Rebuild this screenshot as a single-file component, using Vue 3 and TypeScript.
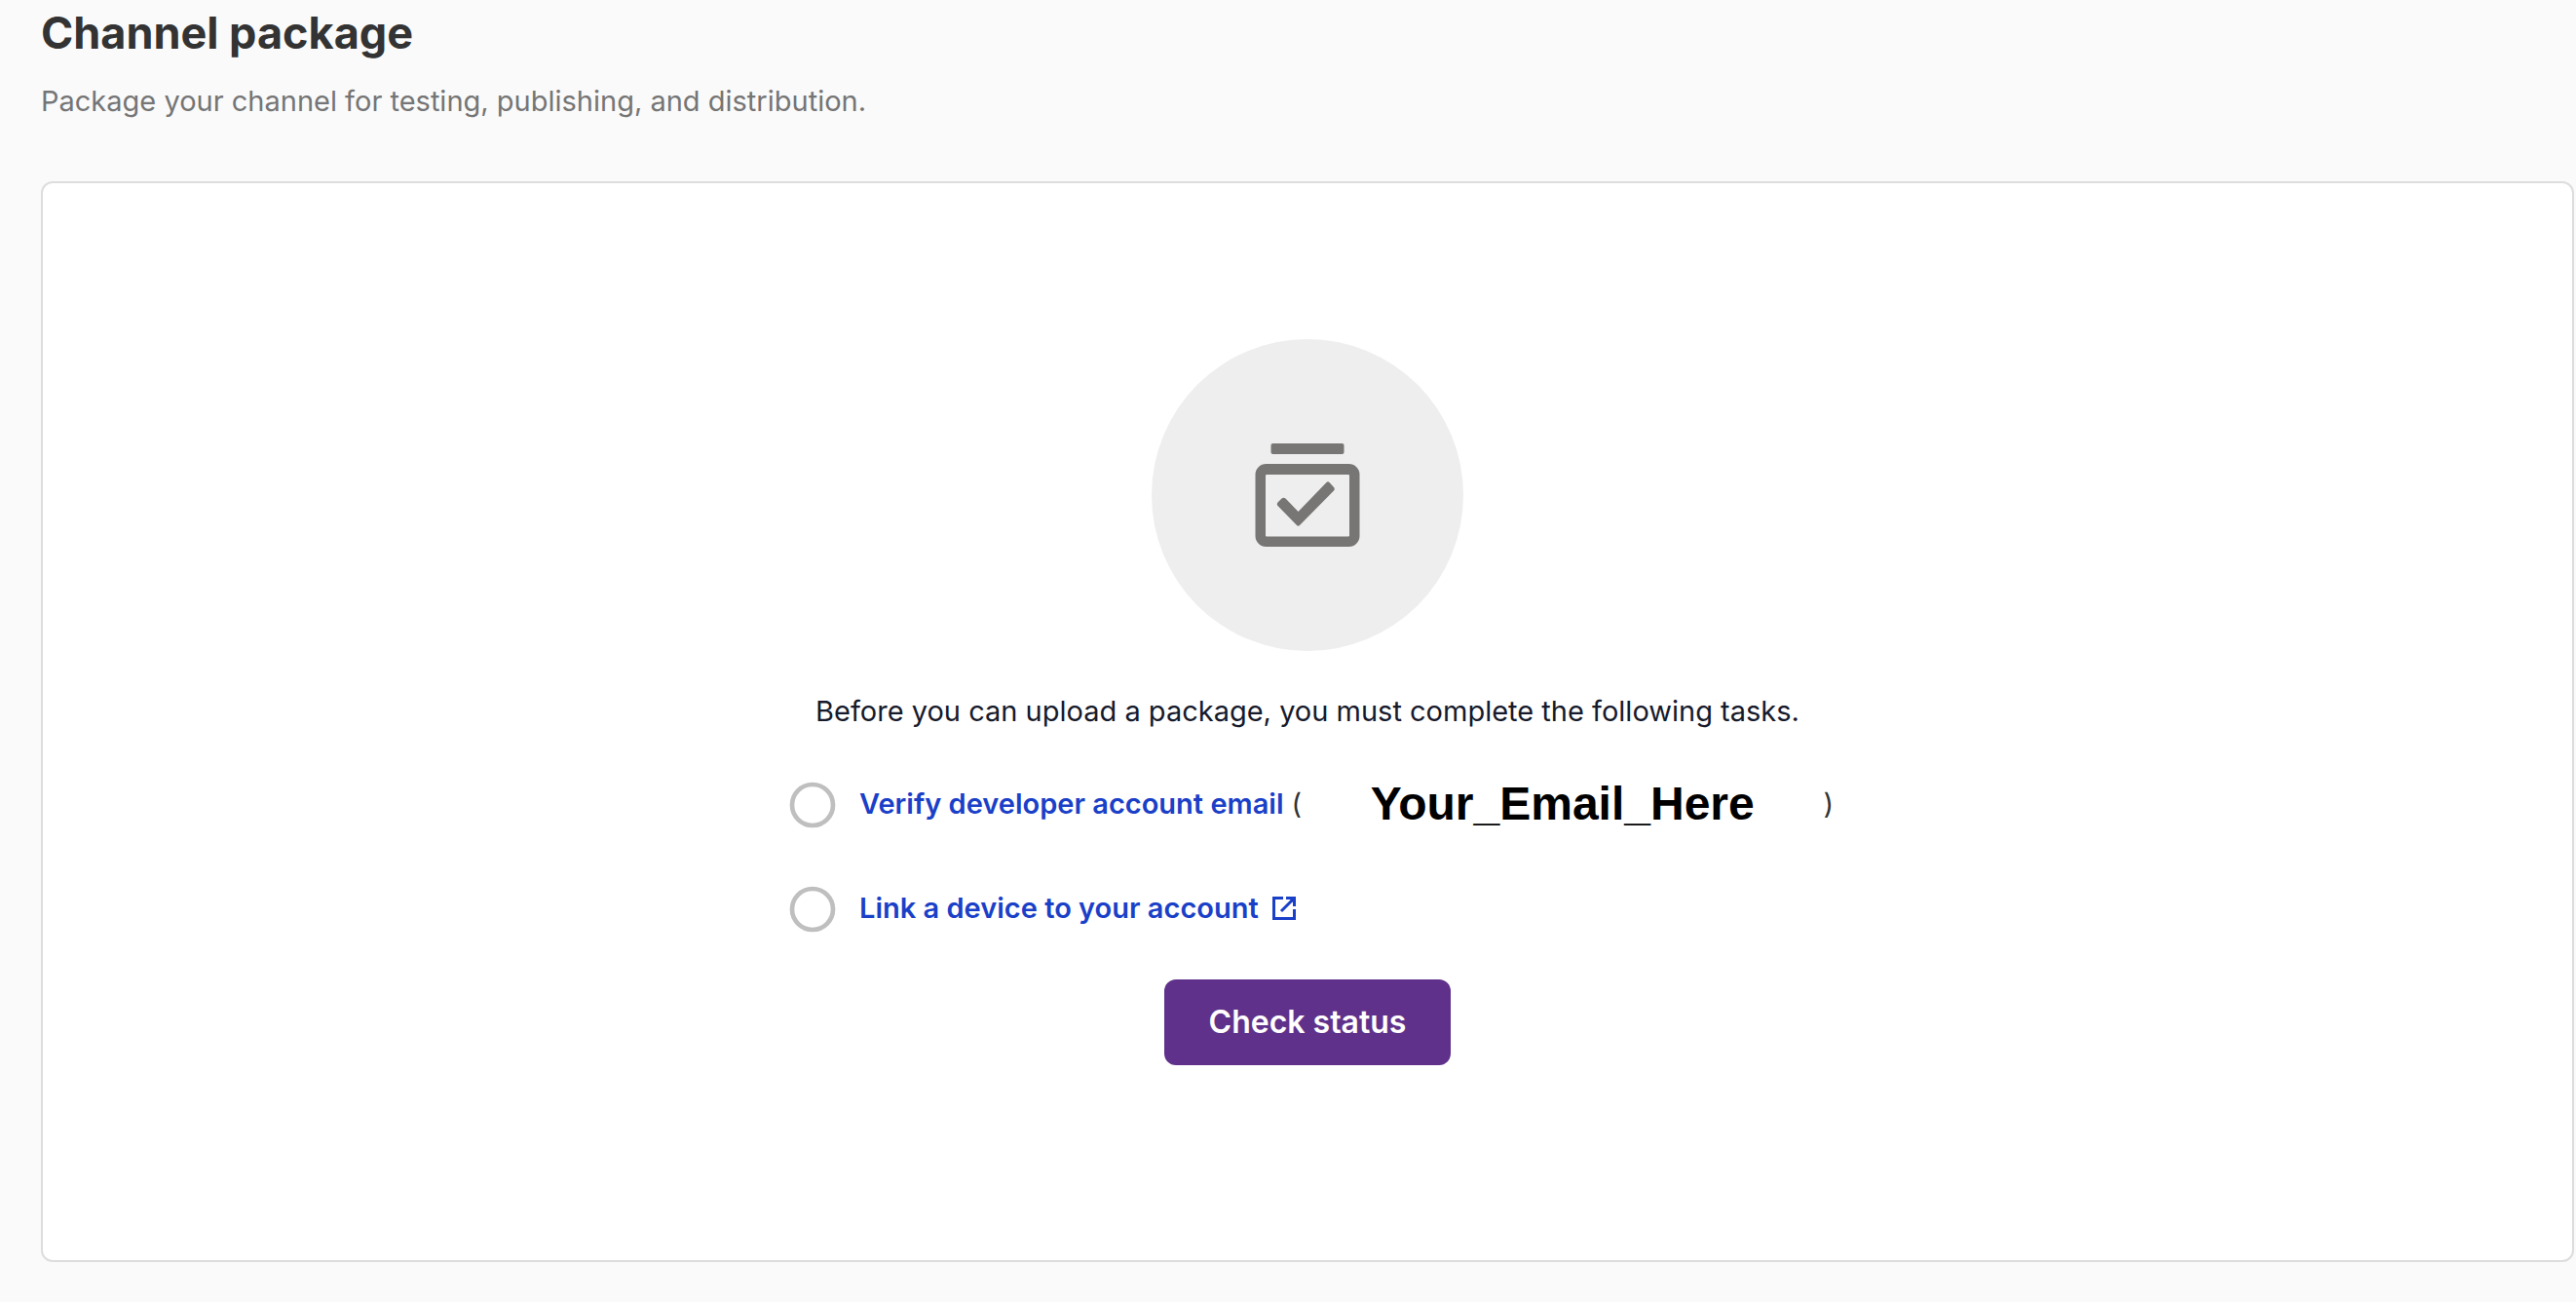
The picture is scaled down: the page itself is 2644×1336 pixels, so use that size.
<script setup lang="ts">
interface Task {
  label: string
  href: string
  email?: string
  external?: boolean
}

const tasks: Task[] = [
  { label: 'Verify developer account email', href: '#verify-email', email: 'Your_Email_Here' },
  { label: 'Link a device to your account', href: '#link-device', external: true },
]
</script>

<template>
  <main class="page">
    <header class="heading">
      <h1>Channel package</h1>
      <p>Package your channel for testing, publishing, and distribution.</p>
    </header>

    <section class="card">
      <div class="badge">
        <svg viewBox="0.500 0 108 108" aria-hidden="true">
          <rect x="17" y="1" width="75" height="11" rx="2" />
          <path
            fill-rule="evenodd"
            d="M12 22H97A11 11 0 0 1 108 33V96A11 11 0 0 1 97 107H12A11 11 0 0 1 1 96V33A11 11 0 0 1 12 22ZM12.500 33Q11.500 33 11.500 34V95.500Q11.500 96.500 12.500 96.500H96.500Q97.500 96.500 97.500 95.500V34Q97.500 33 96.500 33Z"
          />
          <path
            d="M24 61.500L28 57.500Q30 56 32 57.500L45 71L74 41Q75.500 39.500 77 41L81.500 46Q83 47.500 81.500 49.500L46.500 85Q45 86.500 43.500 85L24 65Q22.500 63.500 24 61.500Z"
          />
        </svg>
      </div>

      <p class="intro">Before you can upload a package, you must complete the following tasks.</p>

      <ul class="tasks">
        <li v-for="task in tasks" :key="task.label">
          <svg class="status" viewBox="0 0 24 24" aria-hidden="true">
            <circle cx="12" cy="12" r="9" />
          </svg>
          <a :href="task.href">
            {{ task.label }}
            <svg v-if="task.external" class="external" viewBox="0 0 24 24" aria-hidden="true">
              <path d="M11 1.500H1.500V22.500H22.500V13M14 1.500H22.500V10M22 2L9 15" />
              <path class="tip" d="M17 2H22V7Z" />
            </svg>
          </a>
          <span v-if="task.email" class="account">
            <span>(</span>
            <strong>{{ task.email }}</strong>
            <span>)</span>
          </span>
        </li>
      </ul>

      <button type="button">Check status</button>
    </section>
  </main>
</template>

<style>
body {
  margin: 0;
  background: #fafafa;
}
</style>

<style scoped>
.page {
  padding: 8px 2px 40px 42px;
  color: #333333;
  font-family: Inter, "Liberation Sans", sans-serif;
  font-size: 29px;
  line-height: 44px;
}

.heading {
  margin-bottom: 60px;
}

h1 {
  margin: 0 0 18px;
  font-size: 45px;
  font-weight: 700;
  line-height: 52px;
}

p {
  margin: 0;
}

.heading p {
  padding-top: 4px;
  color: #757575;
}

.card {
  display: flex;
  flex-direction: column;
  align-items: center;
  padding: 160px 24px 200px;
  border: 2px solid #dddddd;
  border-radius: 12px;
  background: #ffffff;
}

.badge {
  display: flex;
  align-items: center;
  justify-content: center;
  width: 320px;
  height: 320px;
  border-radius: 50%;
  background: #eeeeee;
}

.badge svg {
  width: 108px;
  height: 108px;
  fill: #777674;
}

.intro {
  margin-top: 40px;
  color: #161a2b;
}

.tasks {
  display: flex;
  flex-direction: column;
  gap: 51px;
  width: 1076px;
  margin: 46px 0 44px;
  padding: 0 0 0 4px;
  list-style: none;
}

.tasks li {
  display: flex;
  align-items: center;
  height: 56px;
}

.status {
  flex: none;
  width: 56px;
  height: 56px;
  margin-right: 20px;
  fill: none;
  stroke: #bfbfbf;
  stroke-width: 2;
}

a {
  display: flex;
  align-items: center;
  gap: 14px;
  padding-bottom: 2px;
  color: #1a40c8;
  font-weight: 600;
  text-decoration: none;
  white-space: nowrap;
}

.external {
  width: 24px;
  height: 24px;
  fill: none;
  stroke: currentColor;
  stroke-width: 3;
}

.external .tip {
  fill: currentColor;
  stroke: none;
}

.account {
  display: flex;
  flex: 1;
  align-items: center;
  justify-content: space-between;
  margin-left: 8px;
  padding-bottom: 2px;
}

.account strong {
  color: #000000;
  font-family: "Liberation Sans", Arial, sans-serif;
  font-size: 48px;
  font-weight: 700;
}

button {
  padding: 22px 46px;
  border: 0;
  border-radius: 12px;
  background: #5f318b;
  color: #ffffff;
  font-family: inherit;
  font-size: 32px;
  font-weight: 600;
  line-height: 44px;
}
</style>
